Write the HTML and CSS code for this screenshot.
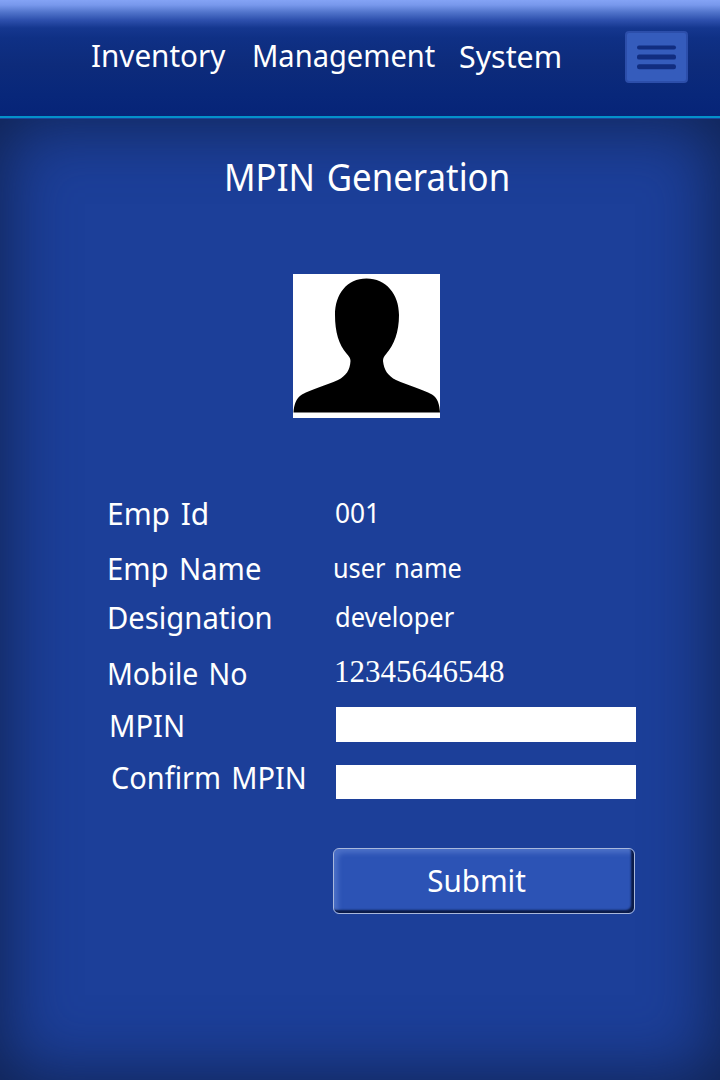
FILE: index.html
```html
<!DOCTYPE html>
<html lang="en">
<head>
<meta charset="utf-8">
<title>MPIN Generation</title>
<link rel="stylesheet" href="styles.css">
</head>
<body>
<header class="topbar">
  <h1 class="brand"><span class="brand-inventory">Inventory</span><span class="brand-management">Management</span><span class="brand-system">System</span></h1>
  <button class="menu" aria-label="Menu">
    <svg width="40" height="26" viewBox="0 0 40 26"><g fill="#112d80"><rect x="0" y="1.500" width="39" height="4" rx="2"/><rect x="0" y="10.600" width="39" height="5" rx="2.200"/><rect x="0" y="20.300" width="39" height="5" rx="2.200"/></g></svg>
  </button>
</header>
<main class="screen">
  <h2 class="title">MPIN Generation</h2>
  <div class="avatar">
    <svg width="147" height="144" viewBox="0 0 147 144"><path d="M73.5 4.5C93 4.5 106 20 106 41C106 58 101 71 93.500 79.500C91 82.500 90 84 90 87C91 96 95 102 103 106C115 111.500 129 115 139 120.500C145 124 146.500 131 147 138.500H0.500C1 131 3 124 9 120.500C19 115 33 111.500 45 106C53 102 57 96 57.500 87C57.500 84 56 82.500 53.500 79.500C46 71 42 58 42 41C42 20 54 4.500 73.500 4.500Z"/></svg>
  </div>
  <form class="form">
    <div class="row row-id"><span class="label">Emp Id</span><span class="value">001</span></div>
    <div class="row row-name"><span class="label">Emp Name</span><span class="value">user name</span></div>
    <div class="row row-role"><span class="label">Designation</span><span class="value">developer</span></div>
    <div class="row row-mobile"><span class="label">Mobile No</span><span class="value">12345646548</span></div>
    <div class="row row-mpin"><label class="label" for="mpin">MPIN</label><input class="field" id="mpin" type="password"></div>
    <div class="row row-confirm"><label class="label" for="confirm">Confirm MPIN</label><input class="field" id="confirm" type="password"></div>
    <button class="submit" type="button"><span class="submit-text">Submit</span></button>
  </form>
</main>
</body>
</html>
```
FILE: styles.css
```css
* { box-sizing: border-box; }
body {
  margin: 0;
  width: 720px;
  height: 1080px;
  overflow: hidden;
  display: flex;
  flex-direction: column;
  color: #fff;
  background: #1c3f99;
  font-family: "Noto Sans", sans-serif;
}
.topbar {
  flex: none;
  height: 118px;
  display: flex;
  justify-content: space-between;
  padding: 31px 32px 0 91px;
  border-bottom: 2px solid #0491ca;
  background: linear-gradient(#84a3f5 0, #7898ec 5px, #5275cc 12px, #2e50ad 20px, #15378f 28px, #0f3085 38px, #0d2b7b 65px, #08277a 95px, #062478 116px);
}
.brand {
  margin: 0;
  display: flex;
  padding-top: 4px;
  font-size: 31.5px;
  font-weight: 400;
  line-height: 39px;
}
.brand span, .title, .label, .value, .submit-text { transform-origin: 0 0; }
.brand-inventory { width: 161px; transform: scaleX(.94); }
.brand-management { width: 207px; transform: scaleX(.923); }
.brand-system { padding-top: 1px; transform: scaleX(.963); }
.menu {
  width: 63px;
  height: 52px;
  padding: 0;
  border: 2px solid #2c4eaa;
  border-radius: 4px;
  background: #355cbc;
  display: grid;
  place-items: center;
}
.menu svg { display: block; }
.screen {
  flex: 1;
  border-top: 1px solid #1a439c;
  box-shadow: inset 0 0 68px 3px #10224f;
}
.title {
  margin: 31px 0 0 224px;
  font-size: 39px;
  font-weight: 400;
  line-height: 52px;
  white-space: nowrap;
  word-spacing: 3px;
  transform: scaleX(.893);
}
.avatar {
  width: 147px;
  height: 144px;
  margin: 72px 0 0 293px;
  background: #fff;
}
.avatar svg { display: block; }
.form { margin: 75px 0 0 107px; }
.row {
  display: grid;
  grid-template-columns: 229px 300px;
  align-items: start;
  white-space: nowrap;
}
.row-id { height: 55px; }
.row-name { height: 49px; }
.row-role { height: 56px; }
.row-mobile { height: 52px; }
.row-mpin { height: 52px; }
.row-confirm { height: 91px; }
.label { font-size: 31.5px; line-height: 39px; word-spacing: 3px; }
.value { font-size: 28px; line-height: 40px; margin-top: -1px; margin-left: -2px; word-spacing: 2.5px; }
.row-id .label { transform: scaleX(.95); }
.row-name .label, .row-role .label { transform: scaleX(.928); }
.row-mobile .label { transform: scaleX(.905); }
.row-mpin .label { margin-left: 2px; transform: scaleX(.925); }
.row-confirm .label { margin-left: 4px; transform: scaleX(.918); }
.row-id .value { margin-left: -1px; transform: scaleX(.94); }
.row-name .value { margin-left: -3px; transform: scaleX(.902); }
.row-role .value { margin-left: -1.5px; transform: scaleX(.908); }
.row-mobile .value { font-family: "Liberation Serif", serif; font-size: 31px; }
.field { width: 300px; height: 35px; margin-top: 2px; padding: 0 8px; border: 0; background: #fff; font: 24px "Noto Sans", sans-serif; }
.row-confirm .field { height: 34px; margin-top: 8px; }
.submit {
  display: block;
  width: 302px;
  height: 66px;
  margin-left: 226px;
  padding: 0 14px 2px 0;
  border: 1px solid #a9b8dc;
  border-radius: 6px;
  background: #2c53b5;
  box-shadow: inset -3px -3px 2px #0b1b48, inset 4px 4px 5px #4c70c7;
  color: #fff;
  font: 31.5px/40px "Noto Sans", sans-serif;
}
.submit-text { display: inline-block; transform: scaleX(.94); transform-origin: 50% 0; }
```
